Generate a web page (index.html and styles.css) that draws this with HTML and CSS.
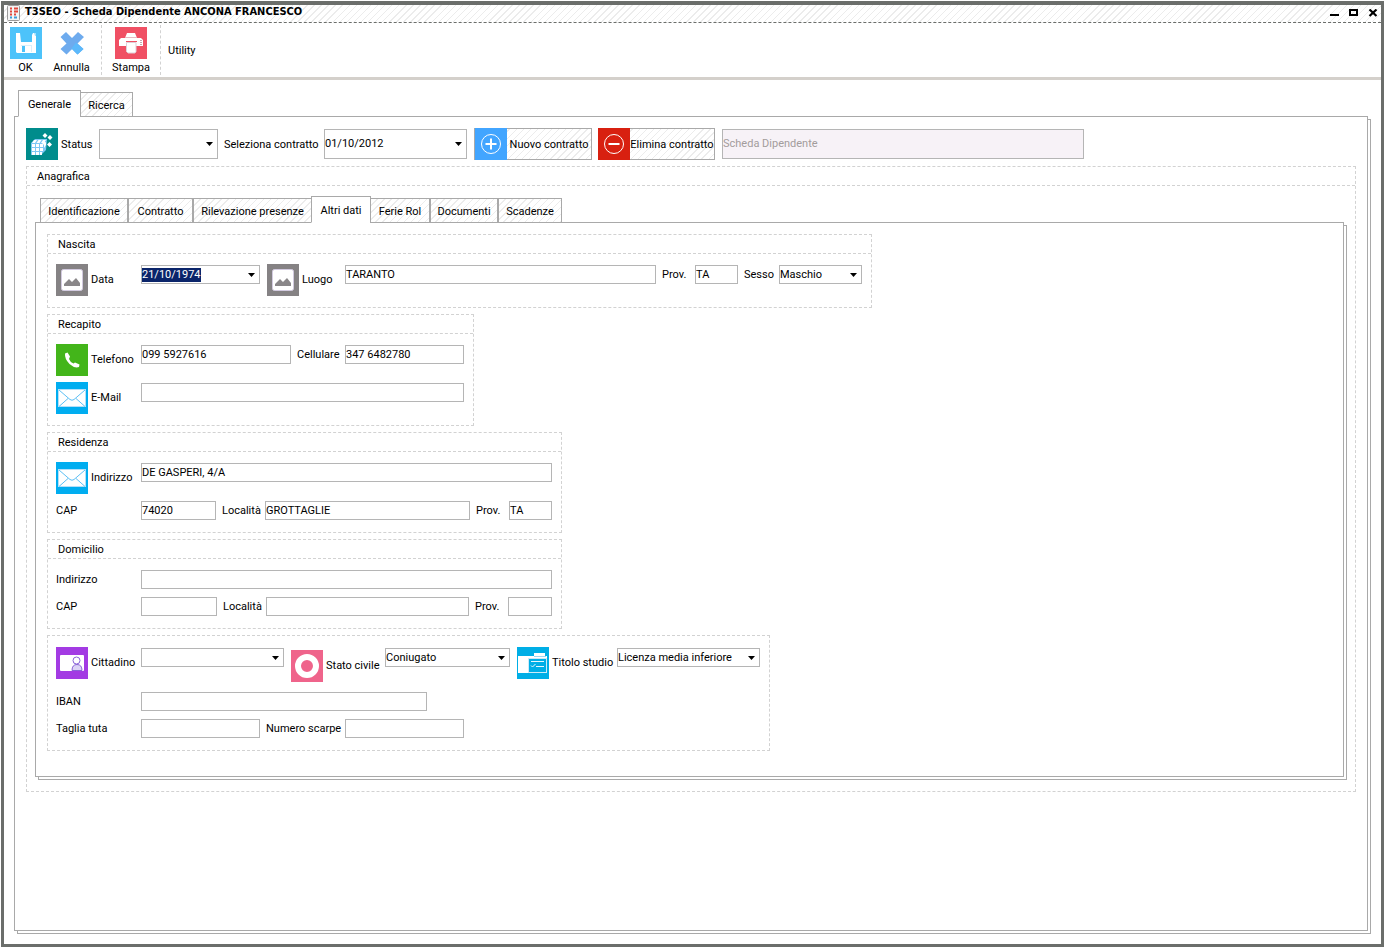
FILE: index.html
```html
<!DOCTYPE html>
<html lang="it">
<head>
<meta charset="utf-8">
<title>T3SEO - Scheda Dipendente</title>
<link rel="stylesheet" href="styles.css">
</head>
<body>
<svg class="defs" aria-hidden="true">
  <symbol id="i-picture" viewBox="0 0 32 32">
    <rect width="32" height="32" fill="#858284"/>
    <rect x="5.5" y="5.5" width="21" height="21" rx="2" fill="#fff" stroke="#d3cbe0"/>
    <path d="M8 22v-2l5-5 3 3 4-4 4 5v3z" fill="#8a8789"/>
  </symbol>
  <symbol id="i-mail" viewBox="0 0 32 32">
    <rect width="32" height="32" fill="#00adf0"/>
    <rect x="2.500" y="7.500" width="27" height="17" fill="#fff" stroke="#b5dff8"/>
    <path d="M3 8l11 9.500q2 1.500 4 0L29 8M3 24.500l9-8M29 24.500l-9-8" fill="none" stroke="#5cc0f5"/>
  </symbol>
</svg>
<div class="window">
  <header class="titlebar">
    <svg class="app-icon" viewBox="0 0 14 16" aria-hidden="true">
      <rect x=".5" y=".5" width="12" height="15" rx="1" fill="#f4f4f4" stroke="#9a9a9a"/>
      <path d="M3 3.500h2M7 3.500h4M3 6.500h2M7 6.500h4M3 9.500h2M7 9.500h2" stroke="#e0473c" stroke-width="2"/>
      <path d="M3 12.500h2M7 12.500h3" stroke="#3b9bd8" stroke-width="2"/>
    </svg>
    <h1>T3SEO - Scheda Dipendente ANCONA FRANCESCO</h1>
    <div class="window-buttons">
      <button type="button" aria-label="Riduci a icona"><svg viewBox="0 0 10 8"><path d="M0 5h9v2H0z"/></svg></button>
      <button type="button" aria-label="Ingrandisci"><svg viewBox="0 0 10 8"><path d="M1 1h7v5H1z" fill="none" stroke="#000" stroke-width="2"/></svg></button>
      <button type="button" aria-label="Chiudi"><svg viewBox="0 0 10 8"><path d="M1.500 .5l7 6.500M8.500 .5l-7 6.500" stroke="#000" stroke-width="2.200"/></svg></button>
    </div>
  </header>

  <nav class="toolbar">
    <button type="button" class="tool tool-ok">
      <svg class="icon" viewBox="0 0 32 32" aria-hidden="true">
        <rect width="32" height="32" fill="#4dc3fa"/>
        <path d="M6 6h4l1 9h11V8l1-2h3v20H7l-1-1z" fill="#fff"/>
        <path d="M24 6h2v3h-1z" fill="#a5dffb"/>
        <path d="M11 18h11v1H11zM21 19h1v6h-1z" fill="#d8f0fc"/>
        <path d="M12 19h3v6h-3z" fill="#4dc3fa"/>
      </svg>OK</button>
    <button type="button" class="tool tool-cancel">
      <svg class="icon" viewBox="0 0 32 32" aria-hidden="true">
        <path d="M10 5l6 6 6-6 6 5-6.500 6.500L27.500 22l-6 5.500-5.500-5.500-5.500 5.500-6-5.500 6-5.500L4.500 10z" fill="#6eabee"/>
        <path d="M20 15.500l7.500 6.500-6 5.500-5.500-5.500-2 1.500z" fill="#5cb9fb"/>
      </svg>Annulla</button>
    <button type="button" class="tool tool-print">
      <svg class="icon" viewBox="0 0 32 32" aria-hidden="true">
        <rect width="32" height="32" fill="#f05064"/>
        <path d="M12 6h8l2 5H10z" fill="#fff"/>
        <path d="M6 11h20l2 2v6H4v-6z" fill="#fff"/>
        <path d="M10 10.500h12" stroke="#e7b9c2"/>
        <path d="M11 14.500h11" stroke="#f05064"/>
        <path d="M11.500 15.500h9.500v9l-1 1.500h-7l-1.500-1.500z" fill="#fff" stroke="#ddd0d8"/>
        <path d="M26 13v5" stroke="#c8a6ae" stroke-width="2" stroke-dasharray="1 1"/>
      </svg>Stampa</button>
    <button type="button" class="tool-text">Utility</button>
  </nav>

  <main class="workspace">
    <div class="tabs tabs-main" role="tablist">
      <button type="button" role="tab" aria-selected="true" class="tab active t-generale">Generale</button>
      <button type="button" role="tab" aria-selected="false" class="tab t-ricerca">Ricerca</button>
    </div>
    <section class="panel panel-main">
      <div class="contract-row">
        <svg class="icon" viewBox="0 0 32 32" aria-hidden="true">
          <rect width="32" height="32" fill="#008c8c"/>
          <path d="M5 15l4-4h12l-1 11-5 5H5z" fill="#7ec8f5"/>
          <path d="M6 16h3v3H6zM10 16h3v3h-3zM14 16h3v3h-3zM6 20h3v3H6zM10 20h3v3h-3zM14 20h3v3h-3zM6 24h3v3H6zM10 24h3v3h-3zM14 24h2v3h-2zM8 12h3l-2 3H6zM12.500 12h3l-2 3h-3zM17 12h3l-2 3h-3zM18 16l2-2v3l-2 3z" fill="#fff"/>
          <path d="M19 5l2.500 2.500L19 10l-2.500-2.500zM24 7l2.500 2.500L24 12l-2.500-2.500zM23.500 14l2.500 2.500-2.500 2.500-2.500-2.500zM18 13l2 2-2 2-2-2z" fill="#fff"/>
        </svg>
        <label class="status-label" for="status">Status</label>
        <select id="status" class="field tall status"><option></option></select>
        <label class="contract-label" for="contratto">Seleziona contratto</label>
        <select id="contratto" class="field tall contract"><option>01/10/2012</option></select>
        <button type="button" class="action action-new">
          <svg class="icon" viewBox="0 0 32 32" aria-hidden="true"><rect width="32" height="32" fill="#42a5ff"/><circle cx="16" cy="16" r="9.500" fill="none" stroke="#fff"/><path d="M16 10.500v11M10.500 16h11" stroke="#fff" stroke-width="2"/></svg><span>Nuovo contratto</span></button>
        <button type="button" class="action action-delete">
          <svg class="icon" viewBox="0 0 32 32" aria-hidden="true"><rect width="32" height="32" fill="#d82010"/><circle cx="16" cy="16" r="9.500" fill="none" stroke="#fff"/><path d="M10.500 16h11" stroke="#fff" stroke-width="2"/></svg><span>Elimina contratto</span></button>
        <input class="field tall card-name" type="text" value="Scheda Dipendente" aria-label="Scheda" disabled>
      </div>

      <section class="group registry">
        <h2 class="group-title">Anagrafica</h2>
        <div class="registry-body">
          <div class="tabs tabs-inner" role="tablist">
            <button type="button" role="tab" aria-selected="false" class="tab t-ident">Identificazione</button>
            <button type="button" role="tab" aria-selected="false" class="tab t-contratto">Contratto</button>
            <button type="button" role="tab" aria-selected="false" class="tab t-rilev">Rilevazione presenze</button>
            <button type="button" role="tab" aria-selected="true" class="tab active t-altri">Altri dati</button>
            <button type="button" role="tab" aria-selected="false" class="tab t-ferie">Ferie Rol</button>
            <button type="button" role="tab" aria-selected="false" class="tab t-doc">Documenti</button>
            <button type="button" role="tab" aria-selected="false" class="tab t-scad">Scadenze</button>
          </div>
          <div class="panel panel-inner">

            <section class="group">
              <h3 class="group-title">Nascita</h3>
              <div class="rows">
                <div class="row">
                  <label class="with-icon lead" for="data"><svg class="icon" aria-hidden="true"><use href="#i-picture"/></svg>Data</label>
                  <div class="combo w-119">
                    <input id="data" type="text" value="21/10/1974"><button type="button" aria-label="Apri calendario"></button>
                  </div>
                  <label class="with-icon next w-78" for="luogo"><svg class="icon" aria-hidden="true"><use href="#i-picture"/></svg>Luogo</label>
                  <input id="luogo" class="field w-311" type="text" value="TARANTO">
                  <label class="next w-33" for="prov1">Prov.</label>
                  <input id="prov1" class="field w-43" type="text" value="TA">
                  <label class="next w-35" for="sesso">Sesso</label>
                  <select id="sesso" class="field w-83"><option>Maschio</option></select>
                </div>
              </div>
            </section>

            <section class="group">
              <h3 class="group-title">Recapito</h3>
              <div class="rows">
                <div class="row">
                  <label class="with-icon lead" for="tel"><svg class="icon" viewBox="0 0 32 32" aria-hidden="true"><rect width="32" height="32" fill="#43b51a"/><path d="M9 9.500l2.500-1 2.500 4-1 2.500q1 3 4.500 4.500l1.500-1 4.500 2-.5 2.500q-4.500 1.500-9.500-3Q8.500 15 9 9.500z" fill="#fff"/></svg>Telefono</label>
                  <input id="tel" class="field w-150" type="text" value="099 5927616">
                  <label class="next w-48" for="cell">Cellulare</label>
                  <input id="cell" class="field w-119" type="text" value="347 6482780">
                </div>
                <div class="row">
                  <label class="with-icon lead" for="email"><svg class="icon" aria-hidden="true"><use href="#i-mail"/></svg>E-Mail</label>
                  <input id="email" class="field w-323" type="text">
                </div>
              </div>
            </section>

            <section class="group">
              <h3 class="group-title">Residenza</h3>
              <div class="rows">
                <div class="row">
                  <label class="with-icon lead" for="ind1"><svg class="icon" aria-hidden="true"><use href="#i-mail"/></svg>Indirizzo</label>
                  <input id="ind1" class="field w-411" type="text" value="DE GASPERI, 4/A">
                </div>
                <div class="row">
                  <label class="lead" for="cap1">CAP</label>
                  <input id="cap1" class="field w-75" type="text" value="74020">
                  <label class="next w-43" for="loc1">Località</label>
                  <input id="loc1" class="field w-205" type="text" value="GROTTAGLIE">
                  <label class="next w-33" for="prov2">Prov.</label>
                  <input id="prov2" class="field w-43" type="text" value="TA">
                </div>
              </div>
            </section>

            <section class="group">
              <h3 class="group-title">Domicilio</h3>
              <div class="rows">
                <div class="row">
                  <label class="lead" for="ind2">Indirizzo</label>
                  <input id="ind2" class="field w-411" type="text">
                </div>
                <div class="row">
                  <label class="lead" for="cap2">CAP</label>
                  <input id="cap2" class="field w-76" type="text">
                  <label class="next w-43" for="loc2">Località</label>
                  <input id="loc2" class="field w-203" type="text">
                  <label class="next w-33" for="prov3">Prov.</label>
                  <input id="prov3" class="field w-44" type="text">
                </div>
              </div>
            </section>

            <section class="group">
              <div class="rows untitled">
                <div class="row">
                  <label class="with-icon lead" for="citt"><svg class="icon" viewBox="0 0 32 32" aria-hidden="true"><rect width="32" height="32" fill="#a33be3"/><rect x="4" y="8" width="24" height="16" rx="1" fill="#fff"/><path d="M16 23.500q0-6 5-6t5 6z" fill="#dcd3f6" stroke="#8a63d8"/><circle cx="20.500" cy="13.500" r="3.500" fill="#fff" stroke="#8a63d8"/></svg>Cittadino</label>
                  <select id="citt" class="field w-143"><option></option></select>
                  <label class="with-icon padded next w-94" for="civile"><svg class="icon" viewBox="0 0 32 32" aria-hidden="true"><rect width="32" height="32" fill="#ef648b"/><circle cx="16" cy="16" r="9" fill="none" stroke="#fff" stroke-width="6"/></svg>Stato civile</label>
                  <select id="civile" class="field w-125"><option>Coniugato</option></select>
                  <label class="with-icon next w-100" for="titolo"><svg class="icon" viewBox="0 0 32 32" aria-hidden="true"><rect width="32" height="32" fill="#00aee6"/><path d="M17 6h11v3h2v17H1V9h16z" fill="#fff"/><path d="M17 9.500h12" stroke="#9bd8f3"/><rect x="11.500" y="11.500" width="18" height="14" fill="#00aee6" stroke="#cdeaf8"/><path d="M14 14.500h13M19 19.500h8M14 18.500l1.500 1.500 3-3" fill="none" stroke="#e8f7fd"/></svg>Titolo studio</label>
                  <select id="titolo" class="field w-143"><option>Licenza media inferiore</option></select>
                </div>
                <div class="row">
                  <label class="lead" for="iban">IBAN</label>
                  <input id="iban" class="field w-286" type="text">
                </div>
                <div class="row">
                  <label class="lead" for="tuta">Taglia tuta</label>
                  <input id="tuta" class="field w-119" type="text">
                  <label class="next w-79" for="scarpe">Numero scarpe</label>
                  <input id="scarpe" class="field w-119" type="text">
                </div>
              </div>
            </section>

          </div>
        </div>
      </section>
    </section>
  </main>
</div>
<script src="script.js"></script>
</body>
</html>
```
FILE: styles.css
```css
* { box-sizing: border-box; }

:root {
  --frame: #6b6e6b;
  --line: #a9a9a9;
  --field-line: #b5b5b5;
  --dash: #d2d2d2;
  --hatch: repeating-linear-gradient(135deg, #fff 0 4px, #ececec 4px 5px);
}

body {
  margin: 0;
  padding: 1px;
  min-height: 100vh;
  display: flex;
  background: #fff;
  color: #000;
  font: 11px/14px Tahoma, Roboto, sans-serif;
}

button, input, select { font: inherit; color: inherit; }
button { padding: 0; border: 0; background: none; white-space: nowrap; }
label { white-space: nowrap; }
h1, h2, h3 { margin: 0; font: inherit; }
.defs { position: absolute; width: 0; height: 0; }
.icon { display: block; flex: none; width: 32px; height: 32px; }

.window {
  flex: 1;
  display: flex;
  flex-direction: column;
  border: 3px solid var(--frame);
  border-top-width: 4px;
}

.titlebar {
  display: flex;
  align-items: flex-start;
  gap: 4px;
  height: 18px;
  padding: 0 3px;
  border-bottom: 1px dashed var(--frame);
  background: var(--hatch);
}
.app-icon { width: 14px; height: 16px; }
.titlebar h1 { font: bold 11px/14px Tahoma, "DejaVu Sans Condensed", sans-serif; }
.window-buttons { display: flex; gap: 9px; margin: 4px 0 0 auto; }
.window-buttons svg { display: block; width: 10px; height: 8px; }

.toolbar {
  display: flex;
  height: 57px;
  padding: 2px 0;
  border-bottom: 3px solid #d4d0cb;
}
.tool {
  display: flex;
  flex-direction: column;
  align-items: center;
  gap: 2px;
  height: 50px;
  padding-top: 2px;
}
.tool-ok { width: 43px; }
.tool-cancel { width: 49px; }
.tool-print { width: 60px; border: dashed var(--dash); border-width: 0 1px; margin-left: 5px; }
.tool-text { padding: 1px 7px 0; height: 50px; }

.workspace {
  flex: 1;
  display: flex;
  flex-direction: column;
  padding: 10px 13px 13px 10px;
}

.tabs { display: flex; align-items: flex-end; position: relative; z-index: 1; margin-bottom: -1px; }
.tabs-main { padding-left: 4px; }
.tabs-inner { padding-left: 5px; }
.tab { height: 25px; padding-top: 2px; border: 1px solid var(--line); background: var(--hatch); }
.tab.active { height: 27px; border-bottom-color: #fff; background: #fff; }
.t-generale { width: 63px; }
.t-ricerca { width: 53px; margin-left: -1px; }
.t-ident { width: 88px; }
.t-contratto { width: 65px; }
.t-rilev { width: 119px; }
.t-altri { width: 60px; margin: 0 -1px; }
.t-ferie { width: 60px; }
.t-doc { width: 68px; }
.t-scad { width: 64px; }

.panel { position: relative; border: 1px solid var(--line); background: #fff; }
.panel::after {
  content: "";
  position: absolute;
  inset: 2px -4px -4px 2px;
  border: 1px solid var(--line);
  clip-path: polygon(100% 0, 100% 100%, 0 100%, 0 calc(100% - 3px), calc(100% - 3px) calc(100% - 3px), calc(100% - 3px) 0);
  pointer-events: none;
}
.panel-main { flex: 1; padding: 11px; }
.panel-inner { padding: 11px 11px 25px; display: flex; flex-direction: column; align-items: flex-start; gap: 6px; }

.contract-row { display: flex; align-items: center; margin-bottom: 6px; }
.contract-row label { padding-top: 1px; }
.contract-row .status-label { width: 41px; padding-left: 3px; }
.contract-row .contract-label { width: 106px; padding-left: 6px; }
.action { display: flex; align-items: center; height: 32px; border: 1px solid var(--line); background: var(--hatch); }
.action .icon { margin-block: -1px; }
.action span { flex: 1; padding-top: 1px; text-align: center; }
.action-new { width: 118px; margin-left: 7px; }
.action-delete { width: 117px; margin: 0 7px 0 6px; border-left: 0; }

.group { border: 1px dashed var(--dash); }
.group-title { height: 19px; padding: 3px 10px 0; border-bottom: 1px dashed var(--dash); }
.registry-body { padding: 10px 11px 14px 8px; }
.rows { display: flex; flex-direction: column; gap: 6px; padding: 10px 9px 11px 8px; }
.rows.untitled { padding-top: 11px; }
.row { display: flex; align-items: flex-start; min-height: 21px; }
.row > label { padding: 4px 0 2px; }
.row > .with-icon { display: flex; align-items: center; gap: 3px; padding: 0; }
.row > .with-icon.padded { padding: 3px 0; }
.row > .lead { width: 85px; }
.row > .next { margin-left: 6px; }
.row > .with-icon.next { margin-left: 7px; }

.field, .combo {
  height: 19px;
  padding: 0;
  border: 1px solid var(--field-line);
  border-radius: 0;
  background: #fff;
  outline: 0;
}
.row > .field, .row > .combo { margin-top: 1px; }
.field.tall { height: 30px; }
select.field, .combo button {
  appearance: none;
  background: #fff url("data:image/svg+xml,%3Csvg xmlns='http://www.w3.org/2000/svg' width='7' height='4'%3E%3Cpath d='M0 0h7L3.500 4z'/%3E%3C/svg%3E") no-repeat right 4px center;
}
.combo { display: flex; }
.combo input { width: 60px; border: 0; padding: 0; outline: 0; background: none; }
.combo button { flex: 1; margin: 0; }
::selection { background: #0a246a; color: #fff; }

.status { width: 119px; }
.contract { width: 143px; }
.card-name { width: 362px; padding-bottom: 2px; background: #f7f2f7; color: #a39c9c; }

.w-33 { width: 33px; }
.w-35 { width: 35px; }
.w-43 { width: 43px; }
.w-44 { width: 44px; }
.w-48 { width: 48px; }
.w-75 { width: 75px; }
.w-76 { width: 76px; }
.w-78 { width: 78px; }
.w-79 { width: 79px; }
.w-83 { width: 83px; }
.w-94 { width: 94px; }
.w-100 { width: 100px; }
.w-119 { width: 119px; }
.w-125 { width: 125px; }
.w-143 { width: 143px; }
.w-150 { width: 150px; }
.w-203 { width: 203px; }
.w-205 { width: 205px; }
.w-286 { width: 286px; }
.w-311 { width: 311px; }
.w-323 { width: 323px; }
.w-411 { width: 411px; }
```
FILE: script.js
```js
const dateField = document.getElementById("data");
dateField.focus();
dateField.select();
```
